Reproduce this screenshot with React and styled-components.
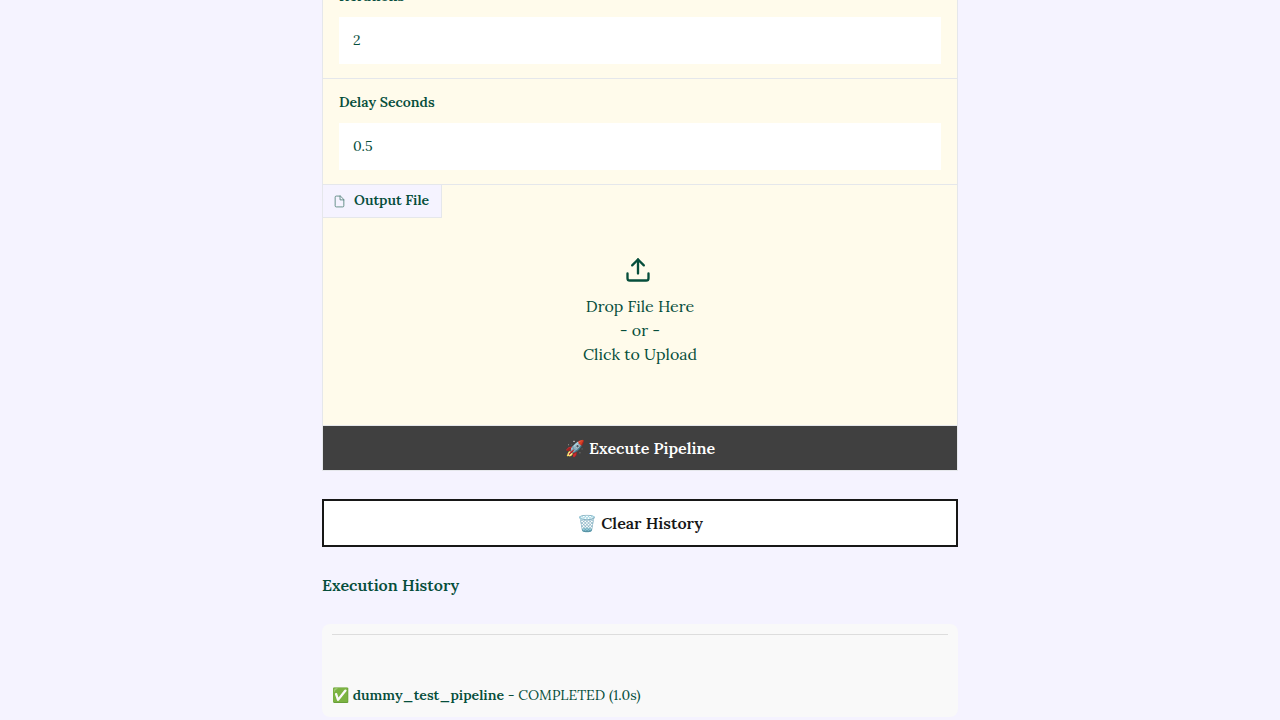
import React from "react";
import styled, { createGlobalStyle } from "styled-components";

const GlobalStyle = createGlobalStyle`
  *, *::before, *::after { box-sizing: border-box; }
  body {
    margin: 0;
    background: #f5f3ff;
    color: #064e3b;
    font-family: Lora, "Noto Serif", "DejaVu Serif", "Liberation Serif", serif;
    font-size: 16px;
    line-height: 24px;
  }
`;

const Page = styled.main`
  display: flex;
  flex-direction: column;
  justify-content: flex-end;
  align-items: center;
  height: 100vh;
  padding: 0 32px 3px;
  overflow: hidden;
`;

const Column = styled.div`
  flex: none;
  width: 100%;
  max-width: 636px;
`;

const Panel = styled.form`
  border: 1px solid #e5e7eb;
  background: #fffbeb;
`;

const Field = styled.label`
  display: block;
  padding: 13px 16px 14px;
  border-bottom: 1px solid #e5e7eb;
`;

const FieldLabel = styled.span`
  display: block;
  margin-bottom: 11px;
  font-size: 14px;
  font-weight: 600;
  line-height: 20px;
`;

const TextInput = styled.input`
  display: block;
  width: 100%;
  height: 47px;
  padding: 0 14px 2px;
  border: 0;
  border-radius: 0;
  background: #fff;
  color: inherit;
  font: inherit;
  font-size: 14px;
`;

const FileBlock = styled.section`
  display: flex;
  flex-direction: column;
  height: 241px;
  border-bottom: 1px solid #e5e7eb;
`;

const FileTag = styled.div`
  display: flex;
  align-items: center;
  align-self: flex-start;
  gap: 8px;
  height: 33px;
  padding: 0 12px 0 10px;
  border: solid #e5e7eb;
  border-width: 0 1px 1px 0;
  background: #f5f3ff;
  font-size: 14px;
  font-weight: 600;
  line-height: 20px;

  svg { opacity: 0.7; }
  span { padding-bottom: 2px; }
`;

const DropZone = styled.button`
  display: flex;
  flex: 1;
  flex-direction: column;
  align-items: center;
  padding: 38px 0 0;
  border: 0;
  background: none;
  color: inherit;
  font: inherit;
  cursor: pointer;
`;

const UploadMark = styled.span`
  display: flex;
  height: 38px;
  padding-right: 4px;
`;

const ExecuteButton = styled.button`
  display: block;
  width: 100%;
  height: 44px;
  padding: 0;
  border: 0;
  background: #404040;
  color: #fff;
  font: inherit;
  font-weight: 600;
`;

const ClearButton = styled.button`
  display: block;
  width: 100%;
  height: 48px;
  margin-top: 28px;
  padding: 0;
  border: 2px solid #171717;
  background: #fff;
  color: #171717;
  font: inherit;
  font-weight: 600;
`;

const HistoryTitle = styled.h3`
  margin: 26px 0 27px;
  font-size: 16px;
  font-weight: 600;
  line-height: 24px;
`;

const HistoryCard = styled.section`
  padding: 10px 10px 11px;
  border-radius: 8px;
  background: #f9f9f9;
`;

const Rule = styled.hr`
  height: 1px;
  margin: 0 0 50px;
  border: 0;
  background: #dddddd;
`;

const Entry = styled.p`
  margin: 0;
  font-size: 14px;
  line-height: 21px;

  strong { font-weight: 600; }
`;

const FileIcon = () => (
  <svg width="13" height="13" viewBox="0 0 24 24" fill="none" stroke="currentColor" strokeWidth="1.5" strokeLinecap="round" strokeLinejoin="round" aria-hidden="true">
    <path d="M13 2H6a2 2 0 0 0-2 2v16a2 2 0 0 0 2 2h12a2 2 0 0 0 2-2V9z" />
    <polyline points="13 2 13 9 20 9" />
  </svg>
);

const UploadIcon = () => (
  <svg width="28" height="28" viewBox="0 0 24 24" fill="none" stroke="currentColor" strokeWidth="2" strokeLinecap="round" strokeLinejoin="round" aria-hidden="true">
    <path d="M21 15v4a2 2 0 0 1-2 2H5a2 2 0 0 1-2-2v-4" />
    <polyline points="17 8 12 3 7 8" />
    <line x1="12" y1="3" x2="12" y2="15" />
  </svg>
);

export default function App() {
  return (
    <>
      <GlobalStyle />
      <Page>
        <Column>
          <Panel onSubmit={(event) => event.preventDefault()}>
            <Field>
              <FieldLabel>Iterations</FieldLabel>
              <TextInput defaultValue="2" inputMode="numeric" />
            </Field>
            <Field>
              <FieldLabel>Delay Seconds</FieldLabel>
              <TextInput defaultValue="0.5" inputMode="decimal" />
            </Field>
            <FileBlock>
              <FileTag>
                <FileIcon />
                <span>Output File</span>
              </FileTag>
              <DropZone type="button">
                <UploadMark>
                  <UploadIcon />
                </UploadMark>
                <span>Drop File Here</span>
                <span>- or -</span>
                <span>Click to Upload</span>
              </DropZone>
            </FileBlock>
            <ExecuteButton type="submit">🚀 Execute Pipeline</ExecuteButton>
          </Panel>
          <ClearButton type="button">🗑️ Clear History</ClearButton>
          <HistoryTitle>Execution History</HistoryTitle>
          <HistoryCard>
            <Rule />
            <Entry>
              ✅ <strong>dummy_test_pipeline</strong> - COMPLETED (1.0s)
            </Entry>
          </HistoryCard>
        </Column>
      </Page>
    </>
  );
}
